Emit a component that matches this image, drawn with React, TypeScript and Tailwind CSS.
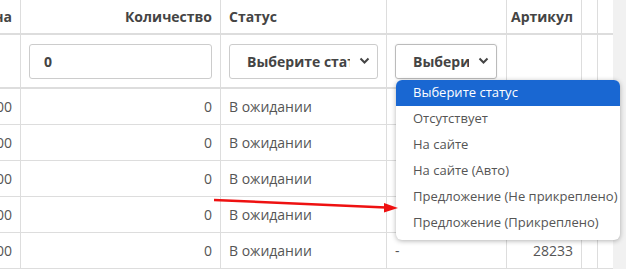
import React from "react";

const rows = [
  { price: "0.00", qty: "0", status: "В ожидании", dash: "", sku: "" },
  { price: "0.00", qty: "0", status: "В ожидании", dash: "", sku: "" },
  { price: "0.00", qty: "0", status: "В ожидании", dash: "", sku: "" },
  { price: "0.00", qty: "0", status: "В ожидании", dash: "", sku: "" },
  { price: "0.00", qty: "0", status: "В ожидании", dash: "-", sku: "28233" },
];

const options = [
  "Выберите статус",
  "Отсутствует",
  "На сайте",
  "На сайте (Авто)",
  "Предложение (Не прикреплено)",
  "Предложение (Прикреплено)",
];

function Chevron() {
  return (
    <svg width="11" height="8" viewBox="0 0 11 8" className="shrink-0">
      <polyline points="1.5,1.5 5.5,5.5 9.5,1.5" fill="none" stroke="#444" strokeWidth="2" />
    </svg>
  );
}

export default function App() {
  return (
    <div
      className="relative h-[269px] w-[626px] overflow-hidden bg-white text-[14px] text-[#555]"
      style={{ fontFamily: '"Open Sans", "Liberation Sans", sans-serif' }}
    >
      <div className="flex">
        <div className="w-[613px]">
          {/* header */}
          <div className="flex h-[35px] border-b-2 border-[#ddd] font-bold text-[#444]">
            <div className="flex w-[21px] items-center justify-end overflow-hidden border-r border-[#ddd] pr-[8px]">
              <span className="whitespace-nowrap">Цена</span>
            </div>
            <div className="flex w-[200px] items-center justify-end border-r border-[#ddd] pr-[8px]">Количество</div>
            <div className="flex w-[166px] items-center border-r border-[#ddd] pl-[8px]">Статус</div>
            <div className="w-[120px] border-r border-[#ddd]" />
            <div className="flex w-[75px] items-center justify-end border-r border-[#ddd] pr-[8px]">Артикул</div>
            <div className="w-[16px] border-r border-[#ddd]" />
          </div>

          {/* filters */}
          <div className="flex h-[54px] border-b-2 border-[#ddd]">
            <div className="w-[21px] border-r border-[#ddd]" />
            <div className="flex w-[200px] items-center border-r border-[#ddd] pl-[8px] pr-[8px]">
              <div className="flex h-[35px] w-full items-center rounded-[3px] border border-[#ccc] pl-[14px] font-bold text-[#444]">
                0
              </div>
            </div>
            <div className="flex w-[166px] items-center border-r border-[#ddd] pl-[8px] pr-[8px]">
              <div className="flex h-[35px] w-[149px] items-center justify-between rounded-[3px] border border-[#ccc] pl-[17px] pr-[7px] font-bold text-[#444]">
                <span className="w-[103px] overflow-hidden whitespace-nowrap">Выберите статус</span>
                <Chevron />
              </div>
            </div>
            <div className="flex w-[120px] items-center border-r border-[#ddd] pl-[8px]">
              <div className="flex h-[35px] w-[102px] items-center justify-between rounded-[3px] border border-[#bbb] pl-[17px] pr-[7px] font-bold text-[#444] shadow-[0_0_2px_rgba(0,0,0,0.1)]">
                <span className="w-[56px] overflow-hidden whitespace-nowrap">Выберите статус</span>
                <Chevron />
              </div>
            </div>
            <div className="w-[75px] border-r border-[#ddd]" />
            <div className="w-[16px] border-r border-[#ddd]" />
          </div>

          {/* data rows */}
          {rows.map((r, i) => (
            <div key={i} className="flex h-[36px] border-b border-[#ddd]">
              <div className="flex w-[21px] items-center justify-end overflow-hidden border-r border-[#ddd] pr-[8px]">
                <span className="whitespace-nowrap">{r.price}</span>
              </div>
              <div className="flex w-[200px] items-center justify-end border-r border-[#ddd] pr-[8px]">{r.qty}</div>
              <div className="flex w-[166px] items-center border-r border-[#ddd] pl-[8px]">{r.status}</div>
              <div className="flex w-[120px] items-center border-r border-[#ddd] pl-[8px]">{r.dash}</div>
              <div className="flex w-[75px] items-center justify-end border-r border-[#ddd] pr-[8px]">{r.sku}</div>
              <div className="w-[16px] border-r border-[#ddd]" />
            </div>
          ))}
        </div>
        <div className="h-[269px] flex-1 bg-[#f1f1f1]" />
      </div>

      {/* dropdown list */}
      <div className="absolute left-[396px] top-[80px] w-[224px] overflow-hidden rounded-[6px] bg-white pb-[4px] text-[13px] shadow-[0_1px_5px_rgba(0,0,0,0.3)]">
        {options.map((o, i) => (
          <div
            key={o}
            className={
              i === 0
                ? "flex h-[26px] items-center whitespace-nowrap bg-[#1967d2] pl-[17px] text-white"
                : "flex h-[26px] items-center whitespace-nowrap pl-[17px] text-[#555]"
            }
          >
            {o}
          </div>
        ))}
      </div>

      {/* red annotation arrow */}
      <svg className="pointer-events-none absolute left-0 top-0" width="626" height="269">
        <line x1="214" y1="200" x2="386" y2="207.5" stroke="#ee1111" strokeWidth="2.5" />
        <polygon points="384,203 398,208 384,212.5" fill="#ee1111" />
      </svg>
    </div>
  );
}
